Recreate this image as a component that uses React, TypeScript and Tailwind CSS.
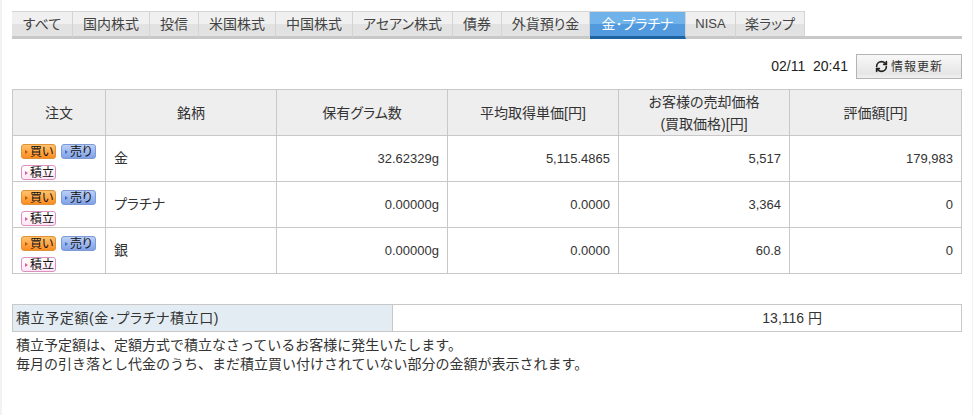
import React from 'react';
import { RefreshCw } from 'lucide-react';

const FONT = '"Liberation Sans", "Noto Sans CJK JP", sans-serif';

const tabs = [
  { label: 'すべて', width: 'w-[61px]' },
  { label: '国内株式', width: 'w-[77px]' },
  { label: '投信', width: 'w-[49px]' },
  { label: '米国株式', width: 'w-[77px]' },
  { label: '中国株式', width: 'w-[77px]' },
  { label: 'アセアン株式', width: 'w-[100px]' },
  { label: '債券', width: 'w-[49px]' },
  { label: '外貨預り金', width: 'w-[88px]' },
  { label: '金･プラチナ', width: 'w-[96px]', active: true },
  { label: 'NISA', width: 'w-[50px]', small: true },
  { label: '楽ラップ', width: 'w-[69px]' },
];

const rows = [
  { name: '金', grams: '32.62329g', cost: '5,115.4865', sell: '5,517', value: '179,983' },
  { name: 'プラチナ', grams: '0.00000g', cost: '0.0000', sell: '3,364', value: '0' },
  { name: '銀', grams: '0.00000g', cost: '0.0000', sell: '60.8', value: '0' },
];

const headCell = 'border border-[#c8c8c8] bg-[#eeeeee] font-normal text-[14px] text-center align-middle leading-[22px] pt-[1px]';
const cell = 'border border-[#c8c8c8] align-middle text-right pr-2 text-[13px]';

// 買い・売り・積立の小さいボタン
const OrderButton = ({ label, kind }: { label: string; kind: 'buy' | 'sell' | 'plan' }) => {
  const styles = {
    buy: 'border-[#e0923a] bg-gradient-to-b from-[#ffc26a] to-[#fb8c1a]',
    sell: 'border-[#7d9ad6] bg-gradient-to-b from-[#bcd0f6] to-[#7fa1e6]',
    plan: 'border-[#dd8fc0] bg-gradient-to-b from-[#ffffff] to-[#fde6f3]',
  };
  const arrow = {
    buy: 'border-l-[#b85c00]',
    sell: 'border-l-[#3f6fc8]',
    plan: 'border-l-[#d9609f]',
  };
  return (
    <span className={`inline-flex items-center w-[35px] h-[15px] rounded-[3px] border pl-[3px] text-[12px] leading-none text-[#111] ${styles[kind]}`}>
      <span className={`w-0 h-0 mr-[2px] border-y-[2px] border-y-transparent border-l-[3px] ${arrow[kind]}`} />
      {label}
    </span>
  );
};

export default function App() {
  return (
    <div className="flex w-[973px] h-[415px] bg-[#f2f2f2] text-[#333] text-[14px] overflow-hidden" style={{ fontFamily: FONT }}>
      <div className="ml-[2px] w-[970px] h-full bg-white pl-[10px] pt-[11px] box-border [font-feature-settings:'palt']">
        {/* タブ */}
        <div className="flex h-[28px] w-[950px] border-b-[3px] border-[#c8c8c8] box-border">
          {tabs.map((t) => (
            <div
              key={t.label}
              className={`${t.width} h-[28px] box-border flex items-center justify-center border-t border-r border-[#d4d4d4] ${t.small ? 'text-[13px]' : 'text-[14px]'} ${
                t.active
                  ? 'bg-[linear-gradient(#70b2ea_50%,#5399de_50%)] border-b-[3px] border-b-[#1d639f] text-white'
                  : 'bg-[linear-gradient(#f0f0f0_50%,#e2e2e2_50%)] border-b-[3px] border-b-[#c8c8c8] text-[#444]'
              }`}
            >
              {t.label}
            </div>
          ))}
        </div>

        {/* 更新 */}
        <div className="flex justify-end items-center mt-[15px] h-[25px] w-[950px]">
          <span className="mr-[8px] text-[14px] text-[#222] whitespace-pre">02/11  20:41</span>
          <button className="w-[106px] h-[25px] flex items-center justify-center gap-[3px] border border-[#b4b4b4] bg-gradient-to-b from-[#f8f8f8] via-[#e6e6e6] via-80% to-[#f0f0f0] text-[12px] text-[#333] tracking-[1px]">
            <RefreshCw size={13} strokeWidth={3} className="text-[#222]" />
            情報更新
          </button>
        </div>

        {/* 保有テーブル */}
        <table className="mt-[10px] w-[950px] border-collapse table-fixed">
          <thead>
            <tr className="h-[45px]">
              <th className={`${headCell} w-[93px]`}>注文</th>
              <th className={`${headCell} w-[171px]`}>銘柄</th>
              <th className={`${headCell} w-[171px]`}>保有グラム数</th>
              <th className={`${headCell} w-[171px]`}>平均取得単価[円]</th>
              <th className={`${headCell} w-[171px]`}>
                お客様の売却価格
                <br />
                (買取価格)[円]
              </th>
              <th className={headCell}>評価額[円]</th>
            </tr>
          </thead>
          <tbody>
            {rows.map((r) => (
              <tr key={r.name} className="h-[46px]">
                <td className="border border-[#c8c8c8] pl-[8px] pt-[8px] align-top">
                  <div className="flex flex-wrap gap-x-[5px] gap-y-[6px] w-[80px]">
                    <OrderButton label="買い" kind="buy" />
                    <OrderButton label="売り" kind="sell" />
                    <OrderButton label="積立" kind="plan" />
                  </div>
                </td>
                <td className="border border-[#c8c8c8] align-middle pl-[8px]">{r.name}</td>
                <td className={cell}>{r.grams}</td>
                <td className={cell}>{r.cost}</td>
                <td className={cell}>{r.sell}</td>
                <td className={cell}>{r.value}</td>
              </tr>
            ))}
          </tbody>
        </table>

        {/* 積立予定額 */}
        <div className="mt-[30px] flex h-[28px] w-[950px] border border-[#c8c8c8] box-border">
          <div className="w-[380px] bg-[#e2ecf2] border-r border-[#c8c8c8] pl-[3px] flex items-center tracking-[0.6px]">積立予定額(金･プラチナ積立口)</div>
          <div className="flex-1 flex items-center justify-end pr-[139px] whitespace-pre">13,116 円</div>
        </div>
        <p className="mt-[4px] pl-[4px] leading-[19px] [font-feature-settings:normal]">
          積立予定額は、定額方式で積立なさっているお客様に発生いたします。
          <br />
          毎月の引き落とし代金のうち、まだ積立買い付けされていない部分の金額が表示されます。
        </p>
      </div>
    </div>
  );
}
